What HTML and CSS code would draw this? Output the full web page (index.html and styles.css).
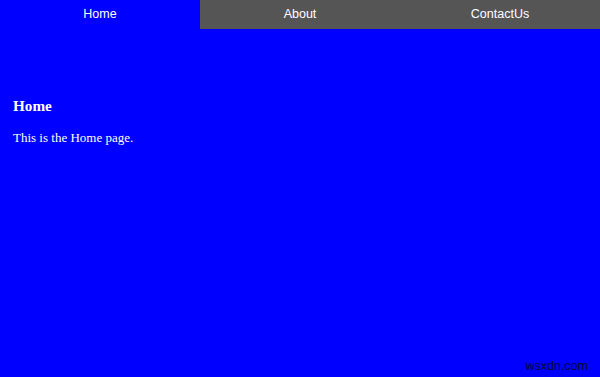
FILE: index.html
```html
<!DOCTYPE html>
<html lang="en">
<head>
    <meta charset="UTF-8">
    <meta name="viewport" content="width=device-width, initial-scale=1.0">
    <title>Tabs</title>
    <link rel="stylesheet" href="styles.css">
</head>
<body>
    <div class="tabs">
        <button class="tablink active">Home</button>
        <button class="tablink">About</button>
        <button class="tablink">ContactUs</button>
    </div>
    <div class="tabcontent">
        <h3>Home</h3>
        <p>This is the Home page.</p>
    </div>
    <span class="watermark">wsxdn.com</span>
</body>
</html>
```

FILE: styles.css
```css
body {
    font-family: "Liberation Serif", "Times New Roman", serif;
    font-size: 13px;
    margin: 0;
    padding: 0;
    background-color: #0000ff;
    color: white;
    height: 377px;
    position: relative;
}
.tabs {
    display: flex;
    height: 29px;
    background-color: #555;
}
.tablink {
    flex: 1;
    border: none;
    margin: 0;
    padding: 0 0 2px;
    background-color: #555;
    color: white;
    font-family: "Liberation Sans", Arial, sans-serif;
    font-size: 12.5px;
    cursor: pointer;
}
.tablink.active {
    background-color: #0000ff;
}
.tabcontent {
    padding: 53px 13px 0;
}
.watermark {
    position: absolute;
    right: 12px;
    bottom: 4px;
    font-family: "Liberation Sans", Arial, sans-serif;
    font-size: 12.5px;
    color: rgba(0, 0, 0, 0.85);
}
```
